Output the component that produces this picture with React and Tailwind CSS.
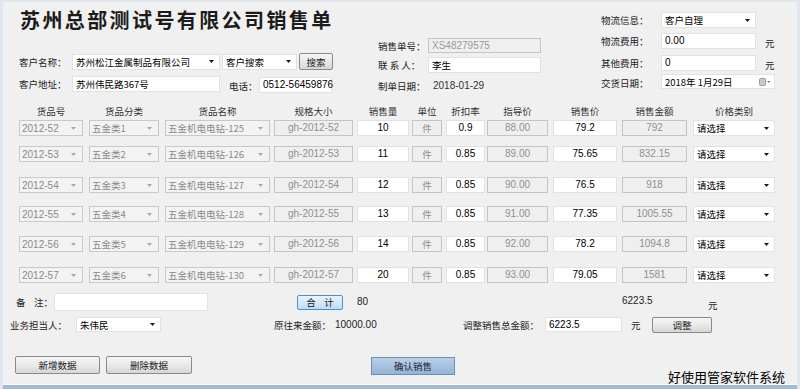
import React from 'react'

const num = "font-['Liberation_Sans','Noto_Sans_CJK_SC',sans-serif] text-[10px]"

function Arrow({ gray }) {
  return (
    <svg width="5" height="3" viewBox="0 0 5 3" className="shrink-0">
      <path d="M0 0h5L2.5 3z" fill={gray ? '#a9a9a9' : '#1a1a1a'} />
    </svg>
  )
}

// white editable combobox
function Combo({ w, h = 'h-[16px]', children, className = '' }) {
  return (
    <div className={`${w} ${h} ${className} flex items-center justify-between bg-white border border-[#e2e2e2] pl-[3px] pr-[5px] text-black`}>
      <span>{children}</span>
      <Arrow />
    </div>
  )
}

// grey, disabled combobox used in the grid
function DimCombo({ w, children }) {
  return (
    <div className={`${w} h-[16px] flex items-center justify-between bg-[#f3f3f3] border border-[#c9c9c9] pl-[2px] pr-[6px] text-[#8a8a8a]`}>
      <span>{children}</span>
      <Arrow gray />
    </div>
  )
}

function Input({ w, h = 'h-[16px]', children, center, className = '' }) {
  return (
    <div className={`${w} ${h} ${className} flex items-center bg-white border border-[#e2e2e2] text-black ${center ? 'justify-center' : 'pl-[3px]'}`}>
      {children}
    </div>
  )
}

function Dim({ w, h = 'h-[16px]', children, center, className = '' }) {
  return (
    <div className={`${w} ${h} ${className} flex items-center bg-[#efefef] border border-[#c4c4c4] text-[#8f8f8f] ${center ? 'justify-center' : 'pl-[3px]'}`}>
      {children}
    </div>
  )
}

function Btn({ w, h, children, className = '' }) {
  return (
    <div className={`${w} ${h} ${className} flex items-center justify-center rounded-[2px] border border-[#8a8a8a] bg-linear-to-b from-[#f6f6f6] via-[#e9e9e9] to-[#d6d6d6] text-[#222]`}>
      {children}
    </div>
  )
}

const cols = [
  { w: 'w-[64px]', ml: '', label: '货品号' },
  { w: 'w-[70px]', ml: 'ml-[6px]', label: '货品分类' },
  { w: 'w-[105px]', ml: 'ml-[6px]', label: '货品名称' },
  { w: 'w-[79px]', ml: 'ml-[4px]', label: '规格大小' },
  { w: 'w-[52px]', ml: 'ml-[4px]', label: '销售量' },
  { w: 'w-[30px]', ml: 'ml-[3px]', label: '单位' },
  { w: 'w-[39px]', ml: 'ml-[4px]', label: '折扣率' },
  { w: 'w-[61px]', ml: 'ml-[2px]', label: '指导价' },
  { w: 'w-[64px]', ml: 'ml-[5px]', label: '销售价' },
  { w: 'w-[65px]', ml: 'ml-[5px]', label: '销售金额' },
  { w: 'w-[82px]', ml: 'ml-[6px]', label: '价格类别' },
]

const rows = [
  { mt: 'mt-[3px]', d: ['2012-52', '五金类1', '五金机电电钻-125', 'gh-2012-52', '10', '0.9', '88.00', '79.2', '792'] },
  { mt: 'mt-[10px]', d: ['2012-53', '五金类2', '五金机电电钻-126', 'gh-2012-53', '11', '0.85', '89.00', '75.65', '832.15'] },
  { mt: 'mt-[15px]', d: ['2012-54', '五金类3', '五金机电电钻-127', 'gh-2012-54', '12', '0.85', '90.00', '76.5', '918'] },
  { mt: 'mt-[13px]', d: ['2012-55', '五金类4', '五金机电电钻-128', 'gh-2012-55', '13', '0.85', '91.00', '77.35', '1005.55'] },
  { mt: 'mt-[14px]', d: ['2012-56', '五金类5', '五金机电电钻-129', 'gh-2012-56', '14', '0.85', '92.00', '78.2', '1094.8'] },
  { mt: 'mt-[15px]', d: ['2012-57', '五金类6', '五金机电电钻-130', 'gh-2012-57', '20', '0.85', '93.00', '79.05', '1581'] },
]

function GridRow({ mt, d }) {
  return (
    <div className={`${mt} flex h-[16px]`}>
      <div className={cols[0].ml}><DimCombo w={cols[0].w}><span className={num}>{d[0]}</span></DimCombo></div>
      <div className={cols[1].ml}><DimCombo w={cols[1].w}>{d[1]}</DimCombo></div>
      <div className={cols[2].ml}><DimCombo w={cols[2].w}>{d[2]}</DimCombo></div>
      <div className={cols[3].ml}><Dim w={cols[3].w} center><span className={num}>{d[3]}</span></Dim></div>
      <div className={cols[4].ml}><Input w={cols[4].w} center><span className={num}>{d[4]}</span></Input></div>
      <div className={cols[5].ml}><Dim w={cols[5].w} center>件</Dim></div>
      <div className={cols[6].ml}><Input w={cols[6].w} center><span className={num}>{d[5]}</span></Input></div>
      <div className={cols[7].ml}><Dim w={cols[7].w} center><span className={num}>{d[6]}</span></Dim></div>
      <div className={cols[8].ml}><Input w={cols[8].w} center><span className={num}>{d[7]}</span></Input></div>
      <div className={cols[9].ml}><Dim w={cols[9].w} center><span className={num}>{d[8]}</span></Dim></div>
      <div className={cols[10].ml}><Combo w={cols[10].w}>请选择</Combo></div>
    </div>
  )
}

export default function App() {
  return (
    <div className="w-[800px] h-[389px] overflow-hidden bg-[#dfe6ee] pt-[2px] px-[3px] pb-[4px] font-['Noto_Sans_CJK_SC',sans-serif] text-[9.5px] leading-[12px] whitespace-nowrap text-[#222]">
      <div className="h-full bg-[#f0f0f0] border-b border-white shadow-[0_4px_0_#a3bad6]">
        {/* top form */}
        <div className="flex h-[95px]">
          <div className="ml-[16px] w-[316px]">
            <div className="mt-[6px] ml-[1px] h-[24px] text-[20px] leading-[24px] font-bold tracking-[2.4px] text-[#1b1b1b]">
              苏州总部测试号有限公司销售单
            </div>
            <div className="mt-[21px] flex items-center h-[17px]">
              <span className="w-[53px]">客户名称：</span>
              <Combo w="w-[148px]">苏州松江金属制品有限公司</Combo>
              <Combo w="w-[75px]" className="ml-[2px]">客户搜索</Combo>
              <Btn w="w-[34px]" h="h-[17px]" className="ml-[2px]">搜索</Btn>
            </div>
            <div className="mt-[5px] flex items-center h-[17px]">
              <span className="w-[53px]">客户地址：</span>
              <Input w="w-[148px]">苏州伟民路367号</Input>
              <span className="ml-[9px] w-[30px] mt-[4px]">电话：</span>
              <Input w="w-[73px]" className="mt-[2px]"><span className={num}>0512-56459876</span></Input>
            </div>
          </div>

          <div className="ml-[43px] w-[165px]">
            <div className="mt-[36px] flex items-center h-[15px]">
              <span className="w-[50px]">销售单号：</span>
              <Dim w="w-[113px]" h="h-[15px]"><span className={`${num} text-[#9a9a9a]`}>XS48279575</span></Dim>
            </div>
            <div className="mt-[4px] flex items-center h-[16px]">
              <span className="w-[50px] whitespace-pre">联 系 人：</span>
              <Input w="w-[113px]">李生</Input>
            </div>
            <div className="mt-[6px] flex items-center h-[14px]">
              <span className="w-[50px]">制单日期：</span>
              <span className={`${num} ml-[5px] text-[#333]`}>2018-01-29</span>
            </div>
          </div>

          <div className="ml-[58px] w-[180px]">
            <div className="mt-[10px] flex items-center h-[16px]">
              <span className="w-[60px]">物流信息：</span>
              <Combo w="w-[95px]">客户自理</Combo>
            </div>
            <div className="mt-[5px] flex items-center h-[16px]">
              <span className="w-[60px]">物流费用：</span>
              <Input w="w-[95px]"><span className={num}>0.00</span></Input>
              <span className="ml-[9px] mt-[3px]">元</span>
            </div>
            <div className="mt-[6px] flex items-center h-[16px]">
              <span className="w-[60px]">其他费用：</span>
              <Input w="w-[95px]"><span className={num}>0</span></Input>
              <span className="ml-[9px] mt-[3px]">元</span>
            </div>
            <div className="mt-[3px] flex items-center h-[15px]">
              <span className="w-[60px] mt-[3px]">交货日期：</span>
              <div className="w-[114px] h-[15px] flex items-center justify-between bg-white border border-[#e2e2e2] pl-[3px] pr-[3px] text-black">
                <span>2018年 1月29日</span>
                <svg width="12" height="8" viewBox="0 0 12 8">
                  <rect x="0.5" y="0.5" width="6" height="7" rx="1" fill="#c9c9c9" stroke="#9a9a9a" />
                  <path d="M8 3h3.5L9.75 5z" fill="#777" />
                </svg>
              </div>
            </div>
          </div>
        </div>

        {/* grid */}
        <div className="ml-[16px]">
          <div className="mt-[8px] flex h-[12px] items-center">
            {cols.map((c) => (
              <div key={c.label} className={`${c.w} ${c.ml} text-center text-[#333]`}>{c.label}</div>
            ))}
          </div>
          {rows.map((r, i) => (
            <GridRow key={i} mt={r.mt} d={r.d} />
          ))}
        </div>

        {/* bottom */}
        <div className="mt-[10px] flex h-[18px] items-center pl-[13px]">
          <span className="w-[38px] whitespace-pre">备    注：</span>
          <Input w="w-[154px]" h="h-[18px]" />
          <div className="ml-[89px] w-[46px] h-[15px] flex items-center justify-center rounded-[2px] border border-[#4f8fc4] bg-linear-to-b from-[#eaf5fd] to-[#bcdcf4] whitespace-pre">合    计</div>
          <span className={`${num} ml-[14px] w-[12px]`}>80</span>
          <span className={`${num} ml-[253px] self-start mt-[2px] w-[33px]`}>6223.5</span>
          <span className="ml-[53px] self-end">元</span>
        </div>

        <div className="mt-[5px] flex h-[17px] items-center pl-[7px]">
          <span className="w-[66px]">业务担当人：</span>
          <Combo w="w-[85px]" h="h-[15px]">朱伟民</Combo>
          <span className="ml-[113px] w-[61px]">原往来金额：</span>
          <span className={`${num} w-[128px]`}>10000.00</span>
          <span className="w-[82px]">调整销售总金额：</span>
          <Input w="w-[77px]" h="h-[15px]"><span className={num}>6223.5</span></Input>
          <span className="ml-[9px] w-[11px]">元</span>
          <Btn w="w-[60px]" h="h-[16px]" className="ml-[10px]">调整</Btn>
        </div>

        <div className="mt-[23px] flex h-[28px] items-start pl-[12px]">
          <Btn w="w-[85px]" h="h-[18px]">新增数据</Btn>
          <Btn w="w-[86px]" h="h-[18px]" className="ml-[6px]">删除数据</Btn>
          <div className="ml-[179px] mt-[1px] w-[84px] h-[18px] flex items-center justify-center border border-[#6f8fb0] bg-linear-to-b from-[#b8cfe7] to-[#94b4d8] text-[#1d2a3a]">确认销售</div>
          <span className="ml-[213px] mt-[13px] text-[13px] leading-[16px] text-black">好使用管家软件系统</span>
        </div>
      </div>
    </div>
  )
}
